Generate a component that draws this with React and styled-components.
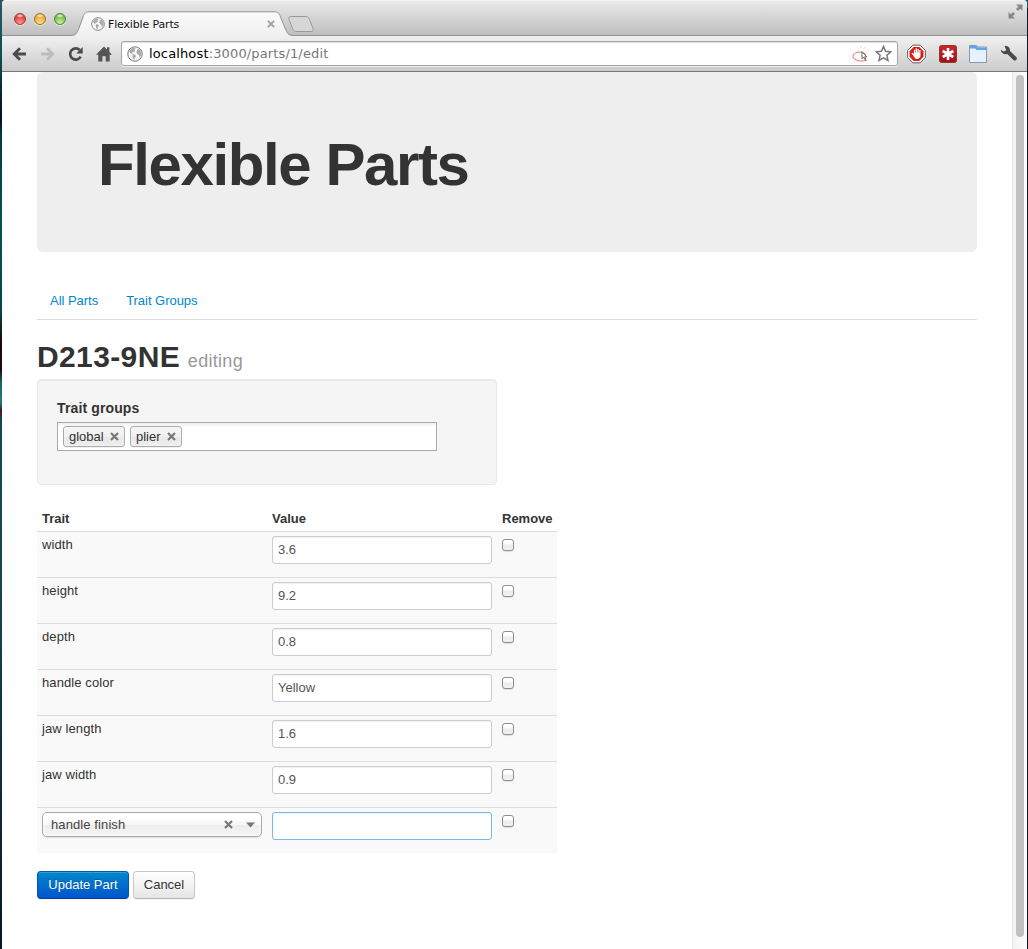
import React from "react";
import styled, { createGlobalStyle } from "styled-components";

const Global = createGlobalStyle`
  *, *::before, *::after { box-sizing: border-box; }
  html, body { margin: 0; padding: 0; overflow: hidden; }
  body { font-family: "Liberation Sans", Arial, sans-serif; font-size: 13px; line-height: 18px; color: #333; }
  svg { display: block; flex: none; }
  input, button { font-family: inherit; }
`;

const Desktop = styled.div`
  width: 1028px;
  height: 949px;
  padding: 0 1px 0 2px;
  background: linear-gradient(#275765 0, #0c5256 55px, #04161f 110px, #02161c 122px, #04393c 132px, #045353 220px, #04474a 310px, #190b0c 340px, #1c0c10 370px, #16696c 383px, #247a7e 402px, #45191b 411px, #164954 420px, #164452 600px, #071722 949px);
  position: relative;
`;
const RightEdge = styled.div`
  position: absolute;
  right: 0;
  top: 8px;
  bottom: 0;
  width: 1px;
  background: #101425;
`;
const Window = styled.div`
  width: 1025px;
  height: 949px;
  background: #fff;
  border-radius: 4px 4px 0 0;
  overflow: hidden;
`;
const TabStrip = styled.header`
  display: flex;
  height: 36px;
  background: linear-gradient(#eaeaea, #dcdcdc 30%, #bdbdbd);
  border-top: 1px solid #f4f4f4;
  box-shadow: inset 0 -1px #929292;
`;
const Lights = styled.div`
  display: flex;
  gap: 8px;
  width: 69px;
  padding: 12px 0 0 12px;
`;
const Light = styled.span`
  width: 12px;
  height: 12px;
  border-radius: 50%;
  border: 1px solid ${(p) => p.$edge};
  background:
    radial-gradient(ellipse 4px 2px at 50% 18%, rgba(255,255,255,.95), rgba(255,255,255,0)),
    radial-gradient(circle at 50% 90%, ${(p) => p.$glow}, ${(p) => p.$fill} 70%);
  box-shadow: 0 1px 0 rgba(255,255,255,.6);
`;
const Tab = styled.div`
  position: relative;
  width: 223px;
  height: 35px;
  display: flex;
  align-items: center;
  padding: 11px 19px 0 20px;
  color: #111;
  font: 11px "DejaVu Sans", sans-serif;
`;
const TabShape = styled.svg`
  position: absolute;
  left: 0;
  top: 10px;
`;
const TabTitle = styled.span`
  position: relative;
  flex: 1;
  margin-left: 3px;
  letter-spacing: -0.15px;
  text-shadow: 0 1px #fff;
`;
const IconLayer = styled.span`
  position: relative;
`;
const NewTabSlot = styled.div`
  margin: 14px 0 0 -7px;
  flex: 1;
`;
const FullScreen = styled.div`
  padding: 3px 4px 0 0;
`;
const Toolbar = styled.div`
  display: flex;
  align-items: center;
  height: 36px;
  padding: 0 9px 0 10px;
  background: linear-gradient(#f0f0f0, #e2e2e2 40%, #cbcbcb);
  border-bottom: 1px solid #777;
`;
const NavButtons = styled.div`
  display: flex;
  align-items: center;
  gap: 13px;
  width: 100px;
  margin-right: 9px;
  svg:last-child { margin-left: -1px; }
`;
const Omnibox = styled.div`
  display: flex;
  align-items: center;
  width: 777px;
  height: 25px;
  padding: 0 5px;
  background: #fff;
  border: 1px solid #a5a5a5;
  border-radius: 3px;
  box-shadow: inset 0 1px 1px rgba(0,0,0,.12), 0 1px rgba(255,255,255,.6);
`;
const Url = styled.span`
  flex: 1;
  margin-left: 6px;
  font: 13px/20px "DejaVu Sans", sans-serif;
  letter-spacing: 0.14px;
  color: #777;
  b { font-weight: normal; color: #000; }
`;
const OmniIcons = styled.div`
  display: flex;
  align-items: center;
  gap: 6px;
`;
const Extensions = styled.div`
  display: flex;
  align-items: center;
  flex: 1;
  justify-content: space-between;
  padding-left: 9px;
`;
const Viewport = styled.div`
  display: flex;
  height: 877px;
`;
const Page = styled.main`
  flex: 1;
  padding-left: 35px;
`;
const ScrollTrack = styled.div`
  width: 15px;
  padding: 3px 3px 0 3px;
  border-left: 1px solid #e6e6e6;
  background: linear-gradient(90deg, #f3f3f3, #fcfcfc);
`;
const ScrollThumb = styled.div`
  width: 8px;
  height: 862px;
  border-radius: 4px;
  background: #c1c1c1;
`;
const Hero = styled.section`
  width: 940px;
  height: 180px;
  padding: 63px 60px 57px 61px;
  background: #eee;
  border-radius: 6px;
`;
const HeroTitle = styled.h1`
  margin: 0;
  font-size: 60px;
  line-height: 60px;
  letter-spacing: -1.4px;
  white-space: nowrap;
`;
const Nav = styled.nav`
  display: flex;
  gap: 2px;
  width: 940px;
  height: 36px;
  margin-top: 32px;
  border-bottom: 1px solid #ddd;
`;
const NavLink = styled.a`
  padding: 8px 13px;
  letter-spacing: -0.03px;
  color: #08c;
`;
const Heading = styled.h2`
  margin: 19px 0 0;
  font-size: 30px;
  line-height: 36px;
  letter-spacing: 0.38px;
  small { font-size: 18px; font-weight: normal; letter-spacing: 0.3px; margin-left: -1px; color: #999; }
`;
const Well = styled.section`
  width: 460px;
  height: 106px;
  padding: 19px;
  background: #f5f5f5;
  border: 1px solid #e9e9e9;
  border-radius: 4px;
  box-shadow: inset 0 1px 1px rgba(0,0,0,.05);
`;
const Label = styled.label`
  display: block;
  margin-bottom: 5px;
  font-size: 14px;
  font-weight: bold;
  letter-spacing: 0.13px;
`;
const TagField = styled.div`
  display: flex;
  gap: 5px;
  width: 380px;
  height: 29px;
  padding: 3px 5px;
  border: 1px solid #aaa;
  background: linear-gradient(#eee 0, #fff 15%);
`;
const Tag = styled.span`
  display: flex;
  align-items: center;
  justify-content: space-between;
  width: ${(p) => p.$w}px;
  height: 21px;
  padding: 0 5px;
  line-height: 13px;
  border: 1px solid #aaa;
  border-radius: 3px;
  background: linear-gradient(#f4f4f4 20%, #f0f0f0 50%, #e8e8e8 52%, #eee);
  box-shadow: 0 0 2px #fff inset, 0 1px 0 rgba(0,0,0,.05);
`;
const Table = styled.table`
  width: 520px;
  margin: 20px 0 18px;
  table-layout: fixed;
  border-spacing: 0;
`;
const Th = styled.th`
  width: ${(p) => p.$w}px;
  height: 26px;
  padding: 5px 5px 3px;
  text-align: left;
`;
const Td = styled.td`
  height: 46px;
  padding: 4px 5px;
  vertical-align: top;
  letter-spacing: 0.1px;
  background: #f9f9f9;
  border-top: 1px solid #ddd;
`;
const Field = styled.input`
  display: block;
  width: 220px;
  height: 28px;
  padding: 3px 5px 5px;
  font-size: 13px;
  line-height: 18px;
  color: #555;
  border: 1px solid ${(p) => (p.$active ? "#74b9ef" : "#ccc")};
  border-radius: 3px;
  background: #fff;
  box-shadow: inset 0 1px 1px rgba(0,0,0,.06);
  outline: none;
`;
const Check = styled.input`
  appearance: none;
  display: block;
  width: 12px;
  height: 12px;
  margin: 3px 0 0;
  border: 1px solid #8e8e8e;
  border-radius: 3px;
  background: linear-gradient(#fff 30%, #ebebeb 60%, #f3f3f3);
  box-shadow: 0 1px 1px rgba(0,0,0,.1);
`;
const Combo = styled.div`
  display: flex;
  align-items: center;
  width: 220px;
  height: 25px;
  padding: 0 5px 0 8px;
  color: #444;
  border: 1px solid #aaa;
  border-radius: 5px;
  background: linear-gradient(#fff 20%, #f6f6f6 50%, #eee 52%, #f4f4f4);
  box-shadow: 0 0 3px #fff inset, 0 1px 1px rgba(0,0,0,.1);
  span { flex: 1; }
  svg + svg { margin-left: 12px; }
`;
const Actions = styled.div`
  display: flex;
  gap: 4px;
`;
const Button = styled.button`
  width: ${(p) => p.$w}px;
  height: 28px;
  padding: 0;
  font-size: 13px;
  line-height: 18px;
  border-radius: 4px;
  border: 1px solid ${(p) => (p.$primary ? "#0055bb" : "#c8c8c8")};
  border-bottom-color: ${(p) => (p.$primary ? "#003f96" : "#b3b3b3")};
  color: ${(p) => (p.$primary ? "#fff" : "#333")};
  background: ${(p) => (p.$primary ? "linear-gradient(#0088cc, #0055cc)" : "linear-gradient(#fff, #e6e6e6)")};
  text-shadow: ${(p) => (p.$primary ? "0 -1px 0 rgba(0,0,0,.25)" : "0 1px 1px rgba(255,255,255,.75)")};
  box-shadow: inset 0 1px 0 rgba(255,255,255,.2), 0 1px 2px rgba(0,0,0,.05);
`;

const Globe = ({ size }) => (
  <svg width={size} height={size} viewBox="0 0 16 16">
    <circle cx="8" cy="8" r="7.2" fill="#f8f8f8" stroke="#777" strokeWidth="1" />
    <path d="M2 5.500 4 2.800 7.300 1.700 8.600 2.600 7.500 4 8.200 5.200 6.300 6.300 5 6.600 5.600 8 3.800 7.400zM5.300 8.300 8 8.700 9.200 10 8 11.700 7.200 14 5.900 12.500zM10.200 3.300 12.400 3.200 14.200 6 14.200 9.200 12.600 11.600 11.900 9 10 7.800 9.500 6z" fill="#aaa" />
  </svg>
);
const Cross = ({ size = 9, color = "#777" }) => (
  <svg width={size} height={size} viewBox="0 0 9 9">
    <path d="M1 1 8 8M8 1 1 8" stroke={color} strokeWidth="2.2" />
  </svg>
);
const Arrow = ({ flip, color }) => (
  <svg width="15" height="16" viewBox="0 0 15 16">
    <path d="M14 8H3M8 2.2 2.2 8 8 13.8" transform={flip ? "matrix(-1 0 0 1 15 0)" : undefined} fill="none" stroke={color} strokeWidth="2.8" />
  </svg>
);
const Reload = () => (
  <svg width="16" height="16" viewBox="0 0 16 16">
    <path d="M12.7 10.6A5.6 5.6 0 1 1 11.7 4" fill="none" stroke="#4b4b4b" strokeWidth="2.6" />
    <path d="M14.7 1v6.500H8.300z" fill="#4b4b4b" />
  </svg>
);
const Home = () => (
  <svg width="16" height="16" viewBox="0 0 16 16">
    <path d="M8 .5 11 3.500V1.200h2.400V6L16 8.700H13.700V15.500H9.700V10.200H6.400V15.500H2.300V8.700H0z" fill="#555" />
  </svg>
);
const ClickIcon = () => (
  <svg width="17" height="17" viewBox="0 0 17 17">
    <path d="M15 15.200C10 17 1 15.600 1 11.300 1 7.500 9 5 14 9.500" fill="none" stroke="#f26a5c" />
    <path d="m5 2 1.500 2M9 1v2M13 2l-1.500 2" stroke="#ddd" />
    <path d="M10 6.700v7l1.600-1.400 1.200 2.300 1-.5-1.100-2.300h2.100z" fill="#fff" stroke="#555" strokeWidth=".9" />
  </svg>
);
const Star = () => (
  <svg width="17" height="17" viewBox="0 0 17 17">
    <path d="m8.500 1.500 2.100 4.800 5.200.5-3.900 3.500 1.100 5.200-4.500-2.700L4 15.500l1.100-5.200L1.200 6.800l5.200-.5z" fill="#fff" stroke="#777" strokeWidth="1.500" />
  </svg>
);
const AdBlock = () => (
  <svg width="19" height="20" viewBox="0 0 20 20">
    <path d="M6.200.7h7.600l5.500 5.500v7.600l-5.500 5.500H6.200L.7 13.800V6.200z" fill="#fff" stroke="#555" />
    <path d="M7 2.700h6L17.300 7v6L13 17.300H7L2.700 13V7z" fill="#dc1f14" />
    <path d="m6.600 11.500-1.900-2 1-.8 1.600 1.200V5.500h1.300v3h.5V4h1.400v4.500h.5V4.700h1.400v4h.5v-3h1.300v6c0 2-1 3.500-3.400 3.500-2.200 0-3-1.500-4.200-3.700z" fill="#fff" />
  </svg>
);
const Asterisk = () => (
  <svg width="18" height="18" viewBox="0 0 18 18">
    <defs>
      <linearGradient id="ruby" x1="0" y1="0" x2="0" y2="1">
        <stop offset="0" stopColor="#cf2531" />
        <stop offset="1" stopColor="#a50d20" />
      </linearGradient>
    </defs>
    <rect x=".5" y=".5" width="17" height="17" rx="2" fill="url(#ruby)" stroke="#8b3a1c" />
    <path d="M9 3v12M3.700 6l10.600 6M14.300 6 3.700 12" stroke="#fff" strokeWidth="2.600" />
  </svg>
);
const WindowIcon = () => (
  <svg width="18" height="18" viewBox="0 0 18 18">
    <path d="M.5 .5H7.500L9 2H17.500V17.500H.5z" fill="#e7f0fd" stroke="#8c98a8" />
    <path d="M1 1h6.300L8.800 2.500H17V5H7.500L6.300 3.500H1z" fill="#5aa7f3" />
  </svg>
);
const Wrench = () => (
  <svg width="18" height="17" viewBox="0 0 18 17">
    <path d="M4.500 1C8 .4 10.300 2.500 10 6l6.500 6.200c1.300 1.600-.8 4.300-2.800 3L7.300 8.900C4.300 9.800 1.200 8.300.7 4.700l3 1.700 2.600-1.200z" fill="#4b4b4b" />
  </svg>
);

const rows = [["width", "3.6"], ["height", "9.2"], ["depth", "0.8"], ["handle color", "Yellow"], ["jaw length", "1.6"], ["jaw width", "0.9"]];

export default function App() {
  return (
    <Desktop>
      <Global />
      <RightEdge />
      <Window>
        <TabStrip>
          <Lights>
            <Light $edge="#a23b38" $fill="#dc3b3b" $glow="#ff9a93" />
            <Light $edge="#a5702a" $fill="#eda12d" $glow="#ffe48a" />
            <Light $edge="#568038" $fill="#75b945" $glow="#cdf59d" />
          </Lights>
          <Tab>
            <TabShape width="223" height="26" viewBox="0 0 223 26">
              <defs>
                <linearGradient id="tab" x1="0" y1="0" x2="0" y2="1">
                  <stop offset="0" stopColor="#fbfbfb" />
                  <stop offset="1" stopColor="#efefef" />
                </linearGradient>
              </defs>
              <path d="M0 24.500C5 24.500 6 22 8 17L12 6C13.500 2 14.500.8 19 .8H203C207 .8 208 2 209.500 6L214 17C216 22 217 24.500 223 24.500V26H0z" fill="url(#tab)" />
              <path d="M0 24.500C5 24.500 6 22 8 17L12 6C13.500 2 14.500.8 19 .8H203C207 .8 208 2 209.500 6L214 17C216 22 217 24.500 223 24.500" fill="none" stroke="#929292" />
            </TabShape>
            <IconLayer><Globe size={14} /></IconLayer>
            <TabTitle>Flexible Parts</TabTitle>
            <IconLayer><Cross size={8} color="#a0a0a0" /></IconLayer>
          </Tab>
          <NewTabSlot>
            <svg width="28" height="18" viewBox="0 0 28 18">
              <path d="M4 1.500H18C20.500 1.500 21.500 2 22.500 4.500L26 13.500C26.500 15.500 26 16.500 24 16.500H10C7.500 16.500 6.500 16 5.500 13.500L2 4.500C1.500 2.500 2 1.500 4 1.500z" fill="#d6d6d6" stroke="#9a9a9a" />
            </svg>
          </NewTabSlot>
          <FullScreen>
            <svg width="15" height="15" viewBox="0 0 15 15">
              <path d="M8 .5h6.500V7L12.300 4.800 10 7 8 5l2.300-2.300zM.5 8 2.700 10.200 5 8l2 2-2.300 2.300L7 14.500H.5z" fill="#888" />
            </svg>
          </FullScreen>
        </TabStrip>
        <Toolbar>
          <NavButtons>
            <Arrow color="#4b4b4b" />
            <Arrow flip color="#bcbcbc" />
            <Reload />
            <Home />
          </NavButtons>
          <Omnibox>
            <Globe size={16} />
            <Url><b>localhost</b>:3000/parts/1/edit</Url>
            <OmniIcons><ClickIcon /><Star /></OmniIcons>
          </Omnibox>
          <Extensions><AdBlock /><Asterisk /><WindowIcon /><Wrench /></Extensions>
        </Toolbar>
        <Viewport>
          <Page>
            <Hero><HeroTitle>Flexible Parts</HeroTitle></Hero>
            <Nav><NavLink>All Parts</NavLink><NavLink>Trait Groups</NavLink></Nav>
            <Heading>D213-9NE <small>editing</small></Heading>
            <Well>
              <Label>Trait groups</Label>
              <TagField>
                <Tag $w={62}>global<Cross /></Tag>
                <Tag $w={52}>plier<Cross /></Tag>
              </TagField>
            </Well>
            <Table>
              <thead>
                <tr><Th $w={230}>Trait</Th><Th $w={230}>Value</Th><Th $w={60}>Remove</Th></tr>
              </thead>
              <tbody>
                {rows.map(([name, value]) => (
                  <tr key={name}>
                    <Td>{name}</Td>
                    <Td><Field defaultValue={value} /></Td>
                    <Td><Check type="checkbox" /></Td>
                  </tr>
                ))}
                <tr>
                  <Td>
                    <Combo>
                      <span>handle finish</span>
                      <Cross />
                      <svg width="11" height="6" viewBox="0 0 11 6"><path d="M1 .5h9L5.500 5.500z" fill="#777" /></svg>
                    </Combo>
                  </Td>
                  <Td><Field $active /></Td>
                  <Td><Check type="checkbox" /></Td>
                </tr>
              </tbody>
            </Table>
            <Actions>
              <Button $primary $w={92}>Update Part</Button>
              <Button $w={62}>Cancel</Button>
            </Actions>
          </Page>
          <ScrollTrack><ScrollThumb /></ScrollTrack>
        </Viewport>
      </Window>
    </Desktop>
  );
}
